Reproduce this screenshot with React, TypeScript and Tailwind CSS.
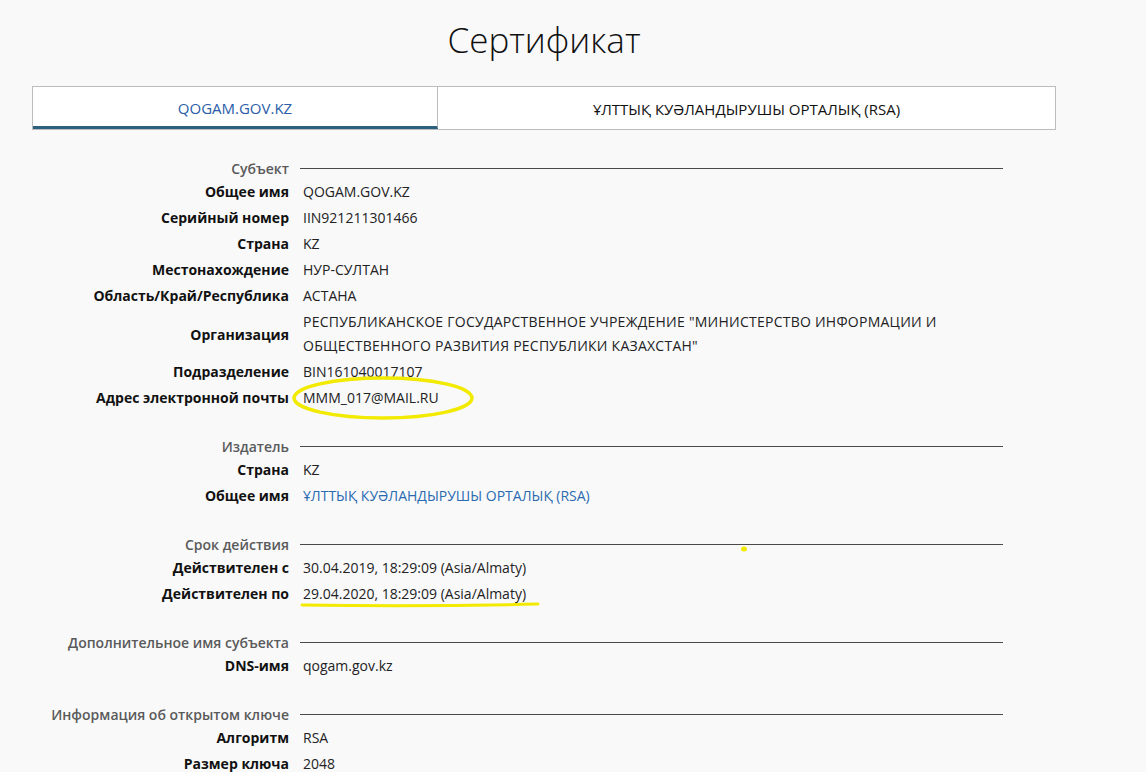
import type { ReactNode } from 'react'

const font = { fontFamily: '"Open Sans", "Noto Sans", sans-serif' }

type Row = { label: string; value: ReactNode; link?: boolean; multi?: boolean }
type Section = { title: string; rows: Row[] }

const sections: Section[] = [
  {
    title: 'Субъект',
    rows: [
      { label: 'Общее имя', value: 'QOGAM.GOV.KZ' },
      { label: 'Серийный номер', value: 'IIN921211301466' },
      { label: 'Страна', value: 'KZ' },
      { label: 'Местонахождение', value: 'НУР-СУЛТАН' },
      { label: 'Область/Край/Республика', value: 'АСТАНА' },
      {
        label: 'Организация',
        value: 'РЕСПУБЛИКАНСКОЕ ГОСУДАРСТВЕННОЕ УЧРЕЖДЕНИЕ "МИНИСТЕРСТВО ИНФОРМАЦИИ И ОБЩЕСТВЕННОГО РАЗВИТИЯ РЕСПУБЛИКИ КАЗАХСТАН"',
        multi: true,
      },
      { label: 'Подразделение', value: 'BIN161040017107' },
      { label: 'Адрес электронной почты', value: 'MMM_017@MAIL.RU' },
    ],
  },
  {
    title: 'Издатель',
    rows: [
      { label: 'Страна', value: 'KZ' },
      { label: 'Общее имя', value: 'ҰЛТТЫҚ КУӘЛАНДЫРУШЫ ОРТАЛЫҚ (RSA)', link: true },
    ],
  },
  {
    title: 'Срок действия',
    rows: [
      { label: 'Действителен с', value: '30.04.2019, 18:29:09 (Asia/Almaty)' },
      { label: 'Действителен по', value: '29.04.2020, 18:29:09 (Asia/Almaty)' },
    ],
  },
  {
    title: 'Дополнительное имя субъекта',
    rows: [{ label: 'DNS-имя', value: 'qogam.gov.kz' }],
  },
  {
    title: 'Информация об открытом ключе',
    rows: [
      { label: 'Алгоритм', value: 'RSA' },
      { label: 'Размер ключа', value: '2048' },
    ],
  },
]

function CertSection({ section }: { section: Section }) {
  return (
    <div className="grid grid-cols-[289px_703px] gap-x-[11px]">
      <div className="h-[20px] flex items-center justify-end text-[14px] font-semibold text-[#5a5a5a] whitespace-nowrap">
        {section.title}
      </div>
      <div className="h-[20px] flex items-center">
        <div className="w-full h-px bg-[#4a4a4a]" />
      </div>
      {section.rows.map((r, i) => (
        <div key={i} className="contents">
          <div className={`${r.multi ? 'h-[50px] pt-[2px]' : 'h-[26px]'} flex items-center justify-end text-[14px] font-bold text-[#111] whitespace-nowrap`}>
            {r.label}
          </div>
          <div
            className={`${r.multi ? 'h-[50px] pt-[2px] leading-[24px] pr-[40px] tracking-[0.25px]' : 'h-[26px] flex items-center'} pl-[3px] text-[14px] ${r.link ? 'text-[#2a6bb0]' : 'text-[#222]'}`}
          >
            {r.value}
          </div>
        </div>
      ))}
    </div>
  )
}

export default function App() {
  return (
    <div className="relative w-[1146px] h-[772px] overflow-hidden bg-[#f9f9fa]" style={font}>
      <div className="pl-[32px] w-[1056px]">
        <h1 className="h-[86px] pt-[15px] text-center text-[35px] font-light text-[#111] leading-[50px]">Сертификат</h1>
        <div className="flex h-[44px] border border-[#bcbcbc] bg-white">
          <div className="w-[405px] pt-[3px] flex items-center justify-center border-r border-[#bcbcbc] border-b-[3px] border-b-[#2c607f] text-[15px] text-[#2a5ca8]">
            QOGAM.GOV.KZ
          </div>
          <div className="flex-1 pt-[2px] flex items-center justify-center text-[15px] text-[#111]">
            ҰЛТТЫҚ КУӘЛАНДЫРУШЫ ОРТАЛЫҚ (RSA)
          </div>
        </div>
      </div>

      <div className="mt-[28px] flex flex-col gap-[26px]">
        {sections.map((s, i) => (
          <CertSection key={i} section={s} />
        ))}
      </div>

      {/* yellow markup over the screenshot */}
      <svg className="absolute left-0 top-0 pointer-events-none" width="1146" height="772">
        <ellipse cx="383" cy="398" rx="89" ry="20" fill="none" stroke="#f2ea00" strokeWidth="3.5" />
        <path d="M302 605 Q420 607 538 604" fill="none" stroke="#f2ea00" strokeWidth="3" strokeLinecap="round" />
        <ellipse cx="744" cy="549" rx="3" ry="2.5" fill="#f2ea00" />
      </svg>
    </div>
  )
}
